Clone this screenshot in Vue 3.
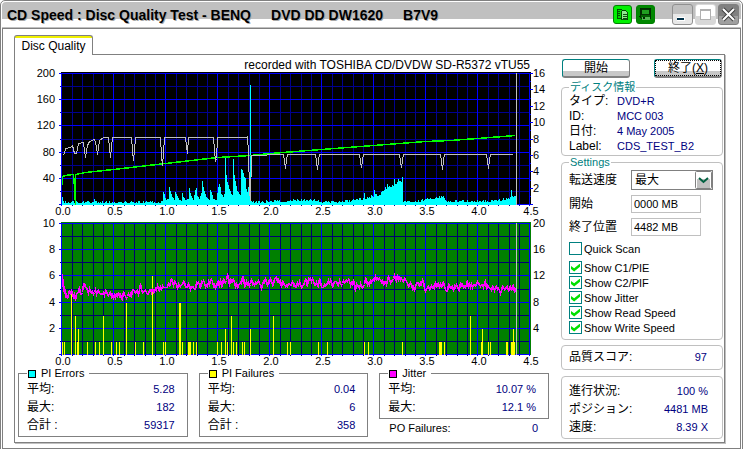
<script setup>
import { ref } from 'vue'

const speed = ref('最大')
const start = ref('0000 MB')
const end = ref('4482 MB')
const checks = ref([
  { id: 'c1', label: 'Show C1/PIE', on: true },
  { id: 'c2', label: 'Show C2/PIF', on: true },
  { id: 'jitter', label: 'Show Jitter', on: true },
  { id: 'read', label: 'Show Read Speed', on: true },
  { id: 'write', label: 'Show Write Speed', on: true },
])
const quick = ref(false)

const disc = [
  ['タイプ:', 'DVD+R'],
  ['ID:', 'MCC 003'],
  ['日付:', '4 May 2005'],
  ['Label:', 'CDS_TEST_B2'],
]
const stats = [
  { name: 'PI Errors', tone: 'cyan', rows: [['平均:', '5.28'], ['最大:', '182'], ['合計 :', '59317']] },
  { name: 'PI Failures', tone: 'yellow', rows: [['平均:', '0.04'], ['最大:', '6'], ['合計 :', '358']] },
  { name: 'Jitter', tone: 'magenta', rows: [['平均:', '10.07 %'], ['最大:', '12.1 %']] },
]
const progress = [
  ['進行状況:', '100 %'],
  ['ポジション:', '4481 MB'],
  ['速度:', '8.39 X'],
]

// Chart geometry
const X0 = 61
const columns = Array.from({ length: 46 }, (_, k) => ({
  x: X0 + Math.ceil(10.4 * k - 0.1),
  major: k % 5 === 0,
})).filter((c) => c.x <= 529)
const xLabels = Array.from({ length: 10 }, (_, k) => ({ x: X0 + 2 + 52 * k, t: (k / 2).toFixed(1) }))
const rowsFor = (top) =>
  Array.from({ length: 11 }, (_, k) => ({ y: top + Math.round(13.1 * k), major: k % 2 === 0 }))
const charts = [
  {
    top: 73, bg: '#000', minor: '#000090', rows: rowsFor(73),
    left: ['200', '160', '120', '80', '40'].map((t, k) => ({ t, y: 73 + Math.round(26.2 * k) })),
    right: ['16', '14', '12', '10', '8', '6', '4', '2'].map((t, k) => ({ t, y: 73 + Math.round(16.4 * k) })),
  },
  {
    top: 223, bg: '#008000', minor: '#000070', rows: rowsFor(223),
    left: ['10', '8', '6', '4', '2'].map((t, k) => ({ t, y: 223 + Math.round(26.2 * k) })),
    right: ['20', '16', '12', '8', '4'].map((t, k) => ({ t, y: 223 + Math.round(26.2 * k) })),
  },
]

// Small deterministic noise source
function noise(seed) {
  let s = seed
  return () => {
    s = (s * 1103515245 + 12345) % 2147483648
    return s / 2147483648
  }
}
function lerp(points, x) {
  for (let i = 1; i < points.length; i++) {
    const [ax, ay] = points[i - 1]
    const [bx, by] = points[i]
    if (x <= bx) return ay + ((by - ay) * (x - ax)) / (bx - ax)
  }
  return points[points.length - 1][1]
}

const peaks = [
  [163, 12], [164, 10], [165, 6], [166, 4], [168, 5], [169, 17], [170, 13], [171, 10], [172, 7], [174, 4], [175, 12], [176, 10],
  [177, 8], [179, 4], [181, 3], [182, 11], [183, 7], [185, 4], [188, 5], [189, 16], [190, 11], [191, 8], [193, 4], [195, 14],
  [196, 16], [197, 8], [199, 5], [201, 11], [202, 23], [203, 17], [204, 13], [206, 7], [209, 4], [210, 14], [211, 12], [213, 5],
  [216, 4], [217, 11], [218, 17], [219, 20], [220, 17], [221, 10], [223, 7], [224, 10], [225, 46], [226, 29], [227, 22], [229, 15],
  [231, 10], [232, 9], [233, 45], [234, 29], [235, 23], [237, 13], [240, 9], [241, 35], [242, 34], [243, 31], [244, 27], [245, 26],
  [246, 15], [247, 12], [248, 17], [249, 12], [250, 119], [251, 3],
]
const floor = [
  [61, 2], [92, 2], [94, 4], [97, 2], [162, 2], [251, 2], [280, 3], [295, 4], [312, 4], [325, 2], [350, 3], [360, 5], [373, 8],
  [380, 10], [385, 16], [395, 20], [402, 24], [403, 3], [420, 3], [430, 6], [444, 7], [446, 3], [490, 3], [505, 5], [515, 8],
]
const single = { 62: 7, 364: 11, 374: 14, 387: 20, 394: 25, 398: 25, 402: 27, 511: 14 }
const r1 = noise(41)
const pieBars = []
for (let x = 62; x < 517; x++) {
  const n = r1()
  let h = x >= 163 && x <= 251 ? lerp(peaks, x) : lerp(floor, x) + (n > 0.75 ? 1 : n > 0.45 ? 0 : -1)
  if (single[x]) h = single[x]
  pieBars.push({ x, h: Math.round(h) + 1 })
}

const fail = {
  1: [62, 64, 77, 87, 95, 99, 111, 116, 119, 135, 143, 163, 165, 182, 188, 189, 190, 193, 196, 217, 221, 227, 233, 236, 242,
    244, 287, 290, 318, 327, 364, 368, 402, 439, 440, 441, 444, 481, 488, 490, 506, 507, 511, 512, 514],
  2: [78, 225, 250, 482, 513],
  3: [75, 103, 231, 273, 470],
  4: [126, 179, 180],
  5: [71],
  6: [152],
}
const failBars = Object.entries(fail).flatMap(([v, xs]) => xs.map((x) => ({ x, h: Math.round(v * 13.1) })))

const jitterBase = [
  [61, 291], [66, 293], [72, 294], [80, 291], [84, 287], [88, 290], [95, 293], [105, 293], [115, 296], [125, 294], [135, 292],
  [140, 290], [145, 292], [155, 289], [165, 288], [170, 284], [180, 285], [200, 284], [220, 283], [227, 280], [235, 283],
  [243, 280], [250, 284], [270, 282], [300, 284], [315, 281], [322, 286], [327, 282], [340, 284], [350, 281], [357, 286],
  [370, 281], [385, 281], [397, 279], [405, 282], [413, 286], [420, 281], [425, 286], [440, 285], [447, 289], [455, 286],
  [465, 284], [475, 286], [485, 284], [495, 289], [505, 287], [515, 287],
]
const spikes = { 62: 274, 64: 286, 75: 300, 83: 283, 140: 283, 227: 274, 242: 276, 355: 291, 397: 274, 414: 291, 485: 280, 514: 292 }
const r2 = noise(7)
const jitter = []
for (let x = 62; x < 516; x++) {
  const y = spikes[x] || Math.round(lerp(jitterBase, x) + (r2() + r2() - 1) * 6)
  jitter.push(`${x},${y}`)
}

const dips = [[285, 168], [317, 169], [361, 167], [401, 167], [442, 169], [488, 168]]
const writeSpeed =
  '62,155 64,153 65,148 70,147 72,145 74,153 76,153 78,143 83,142 84,150 85,157 87,145 89,141 94,139 96,146 97,154 99,140 103,137 108,137 109,148 110,157 112,137 131,137 132,150 133,160 134,150 135,137 160,137 161,155 162,165 163,153 164,137 185,137 187,153 188,137 213,137 214,150 215,160 216,158 217,137 246,137 247,136 248,152 249,190 250,200 251,155 ' +
  dips.map(([x, y]) => `${x - 2},154 ${x - 1},161 ${x},${y} ${x + 1},160 ${x + 2},154`).join(' ') +
  ' 512,154'
const readSpeed =
  '62,184 62,176 65,175 73,174 74,186 75,204 75,174 85,172 113,169 165,163 217,157 250,155 270,153 321,149 373,145 425,141 450,140 477,138 515,135'
</script>

<template>
  <main class="window">
    <header class="titlebar">
      <h1 class="title">
        <span>CD Speed : Disc Quality Test - BENQ</span><span>DVD DD DW1620</span><span>B7V9</span>
      </h1>
      <div class="tools">
        <button class="tool" type="button" aria-label="Copy">
          <svg viewBox="0 0 19 19" shape-rendering="crispEdges">
            <path d="M3.500 3.500h4l2 2v8h-6z" fill="#00d800" stroke="#004000" />
            <path d="M8.500 5.500h5l2 2v8h-7z" fill="#90e890" stroke="#004000" />
            <path d="M5 6.500h2M5 8.500h2M5 10.500h2M10 9.500h4M10 11.500h4M10 13.500h4" stroke="#004000" />
          </svg>
        </button>
        <button class="tool dark" type="button" aria-label="Save">
          <svg viewBox="0 0 19 19" shape-rendering="crispEdges">
            <path d="M3.500 2.500h12v12h-10l-2-2z" fill="#006000" stroke="#002800" />
            <path d="M5.500 3.500h8v6h-8z" fill="#20a020" stroke="#002800" />
            <path d="M6 12h8v4h-8z" fill="#50b850" />
            <path d="M7 12h2v3h-2zM2 11h2v1h-2zM15 14h2v1h-2z" fill="#002800" />
          </svg>
        </button>
      </div>
      <div class="controls">
        <button class="ctl min" type="button" aria-label="Minimize">
          <svg viewBox="0 0 19 19" shape-rendering="crispEdges"><path d="M4 12h8v4h-8z" fill="#fff" /><path d="M4 13h7v2h-7z" fill="#003048" /></svg>
        </button>
        <button class="ctl max" type="button" aria-label="Maximize">
          <svg viewBox="0 0 19 19" shape-rendering="crispEdges"><path d="M4.500 4.500h10v10h-10z" fill="#fff" stroke="#b0b0b0" /><path d="M4 5h11" stroke="#b0b0b0" stroke-width="2" /></svg>
        </button>
        <button class="ctl close" type="button" aria-label="Close">
          <svg viewBox="0 0 19 19"><path d="M4 4l11 11M15 4L4 15" stroke="#404040" stroke-width="4" /><path d="M4 4l11 11M15 4L4 15" stroke="#fff" stroke-width="2" /></svg>
        </button>
      </div>
    </header>

    <div class="body">
      <div class="tabs" role="tablist">
        <button class="tab" type="button" role="tab" aria-selected="true">Disc Quality</button>
      </div>

      <div class="page">
        <section class="left">
          <svg class="charts" viewBox="15 55 540 311" role="img" aria-label="Disc quality charts">
            <text class="note" x="530" y="69" text-anchor="end">recorded with TOSHIBA CD/DVDW SD-R5372 vTU55</text>
            <g v-for="(c, i) in charts" :key="i">
              <g shape-rendering="crispEdges">
                <rect :x="X0" :y="c.top - 1" width="470" height="133" :fill="c.bg" />
                <template v-for="r in c.rows" :key="r.y">
                  <rect v-if="!r.major" x="60" :y="r.y" width="469" height="1" :fill="c.minor" />
                </template>
                <template v-for="v in columns" :key="v.x">
                  <rect :x="v.x" :y="c.top" width="1" height="133" :fill="v.major ? '#0000ff' : c.minor" />
                </template>
                <template v-for="r in c.rows" :key="r.y">
                  <rect v-if="r.major" x="59" :y="r.y" width="470" height="1" fill="#0000ff" />
                </template>
                <template v-if="i === 0">
                  <rect v-for="k in 17" :key="k" x="530" :y="73 + Math.round(8.2 * (k - 1))" :width="k % 2 ? 3 : 1" height="1" fill="#0000ff" />
                  <rect v-for="b in pieBars" :key="b.x" :x="b.x" :y="205 - b.h" width="1" :height="b.h" fill="#00ffff" />
                  <polyline :points="readSpeed" fill="none" stroke="#00ff00" stroke-width="1.500" transform="translate(.5 .5)" />
                  <polyline :points="writeSpeed" fill="none" stroke="#c0c0c0" transform="translate(.5 .5)" />
                </template>
                <template v-else>
                  <rect v-for="b in failBars" :key="b.x" :x="b.x" :y="355 - b.h" width="1" :height="b.h" fill="#ffff00" />
                  <polyline :points="jitter.join(' ')" fill="none" stroke="#ff00ff" stroke-width="1.500" transform="translate(.5 .5)" />
                </template>
                <rect x="516" :y="c.top" width="1" height="132" fill="#c0c0c0" />
              </g>
              <text v-for="l in c.left" :key="l.t" class="axis" x="55" :y="l.y + 4" text-anchor="end">{{ l.t }}</text>
              <text v-for="l in c.right" :key="l.t" class="axis" x="533" :y="l.y + 4">{{ l.t }}</text>
              <text v-for="l in xLabels" :key="l.t" class="axis" :x="l.x" :y="c.top + 142" text-anchor="middle">{{ l.t }}</text>
            </g>
          </svg>

          <div class="stats">
            <div v-for="s in stats" :key="s.name" class="stat">
              <fieldset class="box">
                <legend><i class="swatch" :class="s.tone"></i>{{ s.name }}</legend>
                <dl v-for="r in s.rows" :key="r[0]" class="row">
                  <dt>{{ r[0] }}</dt><dd>{{ r[1] }}</dd>
                </dl>
              </fieldset>
              <dl v-if="s.name === 'Jitter'" class="row po">
                <dt>PO Failures:</dt><dd>0</dd>
              </dl>
            </div>
          </div>
        </section>

        <aside class="side">
          <div class="actions">
            <button class="push" type="button">開始</button>
            <button class="push focus" type="button"><span>終了(<u>X</u>)</span></button>
          </div>

          <fieldset class="group">
            <legend>ディスク情報</legend>
            <dl class="disc">
              <template v-for="d in disc" :key="d[0]"><dt>{{ d[0] }}</dt><dd>{{ d[1] }}</dd></template>
            </dl>
          </fieldset>

          <fieldset class="group settings">
            <legend>Settings</legend>
            <div class="fields">
              <label for="speed">転送速度</label>
              <span class="combo">
                <select id="speed" v-model="speed"><option>最大</option></select>
                <svg viewBox="0 0 17 18" aria-hidden="true">
                  <path d="M.5 1.500q0-1 1-1h14q1 0 1 1v15q0 1-1 1h-14q-1 0-1-1z" fill="#fff" stroke="#808080" />
                  <path d="M2 8h13v9h-13z" fill="#c0c0c0" />
                  <path d="M4 7l4.500 4L13 7" fill="none" stroke="#006040" stroke-width="2" />
                </svg>
              </span>
              <label for="start">開始</label>
              <input id="start" v-model="start" class="text" type="text" />
              <label for="end">終了位置</label>
              <input id="end" v-model="end" class="text" type="text" />
            </div>
            <label class="check quick" for="quick"><input id="quick" v-model="quick" type="checkbox" />Quick Scan</label>
            <label v-for="c in checks" :key="c.id" class="check" :for="c.id"><input :id="c.id" v-model="c.on" type="checkbox" />{{ c.label }}</label>
          </fieldset>

          <div class="group score">
            <dl class="row"><dt>品質スコア:</dt><dd>97</dd></dl>
          </div>

          <div class="group progress">
            <dl v-for="p in progress" :key="p[0]" class="row"><dt>{{ p[0] }}</dt><dd>{{ p[1] }}</dd></dl>
          </div>
        </aside>
      </div>
    </div>
  </main>
</template>

<style>
body {
  background: #fff;
}
</style>

<style scoped>
.window,
.window * {
  box-sizing: border-box;
}
.window {
  border: 1px solid #808080;
  border-radius: 5px 5px 0 0;
  padding: 1px;
  background: #fff;
  color: #000;
  font: 12px/14px "Liberation Sans", "Noto Sans CJK JP", sans-serif;
}
button,
input,
select {
  font: inherit;
  color: inherit;
  margin: 0;
  padding: 0;
}
fieldset,
dl,
dd,
h1 {
  margin: 0;
  padding: 0;
  min-width: 0;
}
.titlebar {
  display: flex;
  align-items: center;
  height: 26px;
  padding: 0 2px 0 5px;
  border-bottom: 1px solid #c0c0c0;
  border-radius: 4px 4px 0 0;
  background: linear-gradient(#c0c0c0 17px, #fff 17px);
}
.title {
  display: flex;
  flex: 1;
  gap: 20px;
  font-size: 14px;
  line-height: 16px;
  white-space: nowrap;
  text-shadow: 1px 1px 0 #a8a8a8;
}
.tools {
  display: flex;
  gap: 4px;
  margin-right: 17px;
}
.tool {
  width: 19px;
  height: 19px;
  border: 1px solid #008000;
  border-radius: 3px;
  background: #00f000;
}
.tool.dark {
  background: #008800;
}
.tool svg,
.ctl svg {
  display: block;
  width: 100%;
  height: 100%;
}
.controls {
  display: flex;
  gap: 2px;
}
.ctl {
  width: 21px;
  height: 21px;
  border: 1px solid #808080;
  border-radius: 3px;
}
.min {
  background: linear-gradient(#c0c0c0 9px, #e8e8e8 9px);
  border-color: #909090;
}
.max {
  background: linear-gradient(#fff 11px, #d8d8d8 11px);
  border-color: #d8d8d8;
}
.close {
  background: linear-gradient(#808080 11px, #a0a0a0 11px);
}
.body {
  border: 1px solid #808080;
  padding: 6px 15px 5px 11px;
  box-shadow: 0 1px #c0c0c0;
}
.tabs {
  display: flex;
}
.tab {
  position: relative;
  width: 79px;
  height: 20px;
  margin-bottom: -1px;
  border: 1px solid #808080;
  border-bottom: 0;
  border-radius: 3px 3px 0 0;
  background: linear-gradient(#f0f000 2px, #fff 2px);
}
.page {
  display: flex;
  gap: 6px;
  padding: 0 1px 3px 0;
  border: 1px solid #808080;
  box-shadow: 1px 1px #c0c0c0;
}
.left {
  flex: 1;
  min-width: 0;
}
.charts {
  display: block;
  width: 100%;
  overflow: visible;
}
.axis {
  font-size: 11px;
}
.note {
  font-size: 12px;
}
.stats {
  display: grid;
  grid-template-columns: repeat(3, 1fr);
  gap: 11px;
  padding: 0 6px 0 3px;
}
.box {
  border: 1px solid #808080;
  padding: 0 3px 2px 8px;
}
.box legend {
  display: flex;
  align-items: center;
  gap: 5px;
  height: 14px;
  padding: 1px 5px 0 1px;
  font-size: 11px;
  line-height: 13px;
}
.swatch {
  width: 8px;
  height: 8px;
  border: 1px solid #000;
}
.cyan {
  background: #0ff;
}
.yellow {
  background: #ff0;
}
.magenta {
  background: #f0f;
}
.row {
  display: flex;
  justify-content: space-between;
  line-height: 18px;
  height: 18px;
}
.box .row {
  padding-right: 9px;
}
dd {
  color: #000080;
  font-size: 11px;
}
.po {
  padding: 0 11px 0 10px;
  font-size: 11px;
}
.side {
  width: 162px;
  padding-top: 4px;
}
.actions {
  display: flex;
  justify-content: space-between;
  margin: 0 1px 3px;
}
.push {
  width: 68px;
  height: 19px;
  border: 1px solid #008080;
  border-right-color: #808080;
  border-bottom: 2px solid #808080;
  border-radius: 3px;
  background: linear-gradient(#fff 11px, #c8c8c8 11px);
  line-height: 14px;
}
.focus span {
  display: block;
  margin: 0 1px;
  outline: 1px dotted #000;
}
.group {
  border: 1px solid #c0c0c0;
  border-radius: 4px;
  padding: 0 7px 1px;
}
.group legend {
  height: 13px;
  line-height: 13px;
  padding: 0 1px;
  font-size: 11px;
  color: #008080;
}
.disc {
  display: grid;
  grid-template-columns: 48px 1fr;
  line-height: 15px;
  grid-auto-rows: 15px;
}
.settings {
  padding: 1px 7px 4px;
}
.fields {
  display: grid;
  grid-template-columns: 62px 1fr;
  grid-template-rows: 20px 19px 19px;
  gap: 4px 0;
  align-items: center;
}
.combo {
  display: grid;
  width: 82px;
  height: 20px;
}
.combo select,
.combo svg {
  grid-area: 1 / 1;
}
.combo select {
  appearance: none;
  height: 20px;
  padding: 0 3px;
  border: 1px solid #808080;
  border-radius: 0;
  background: #fff;
}
.combo svg {
  width: 17px;
  height: 18px;
  justify-self: end;
  align-self: center;
  margin-right: 1px;
  pointer-events: none;
}
.text {
  width: 70px;
  height: 18px;
  border: 1px solid #c0c0c0;
  padding: 0 2px;
  background: #fff;
  font-size: 11px;
}
.check {
  display: flex;
  align-items: center;
  gap: 2px;
  height: 15px;
  font-size: 11px;
}
.check.quick {
  margin: 5px 0 4px;
}
.check input {
  appearance: none;
  display: grid;
  place-items: center;
  width: 13px;
  height: 13px;
  border: 1px solid #008080;
  background: #fff;
}
.check input:checked::before {
  content: "";
  width: 9px;
  height: 8px;
  background: #00e000;
  clip-path: polygon(0 30%, 35% 60%, 100% 0, 100% 40%, 35% 100%, 0 70%);
}
.score {
  margin: 5px 0 6px;
  padding: 2px 15px 3px 7px;
}
.progress {
  padding: 5px 14px 2px 7px;
}
</style>
